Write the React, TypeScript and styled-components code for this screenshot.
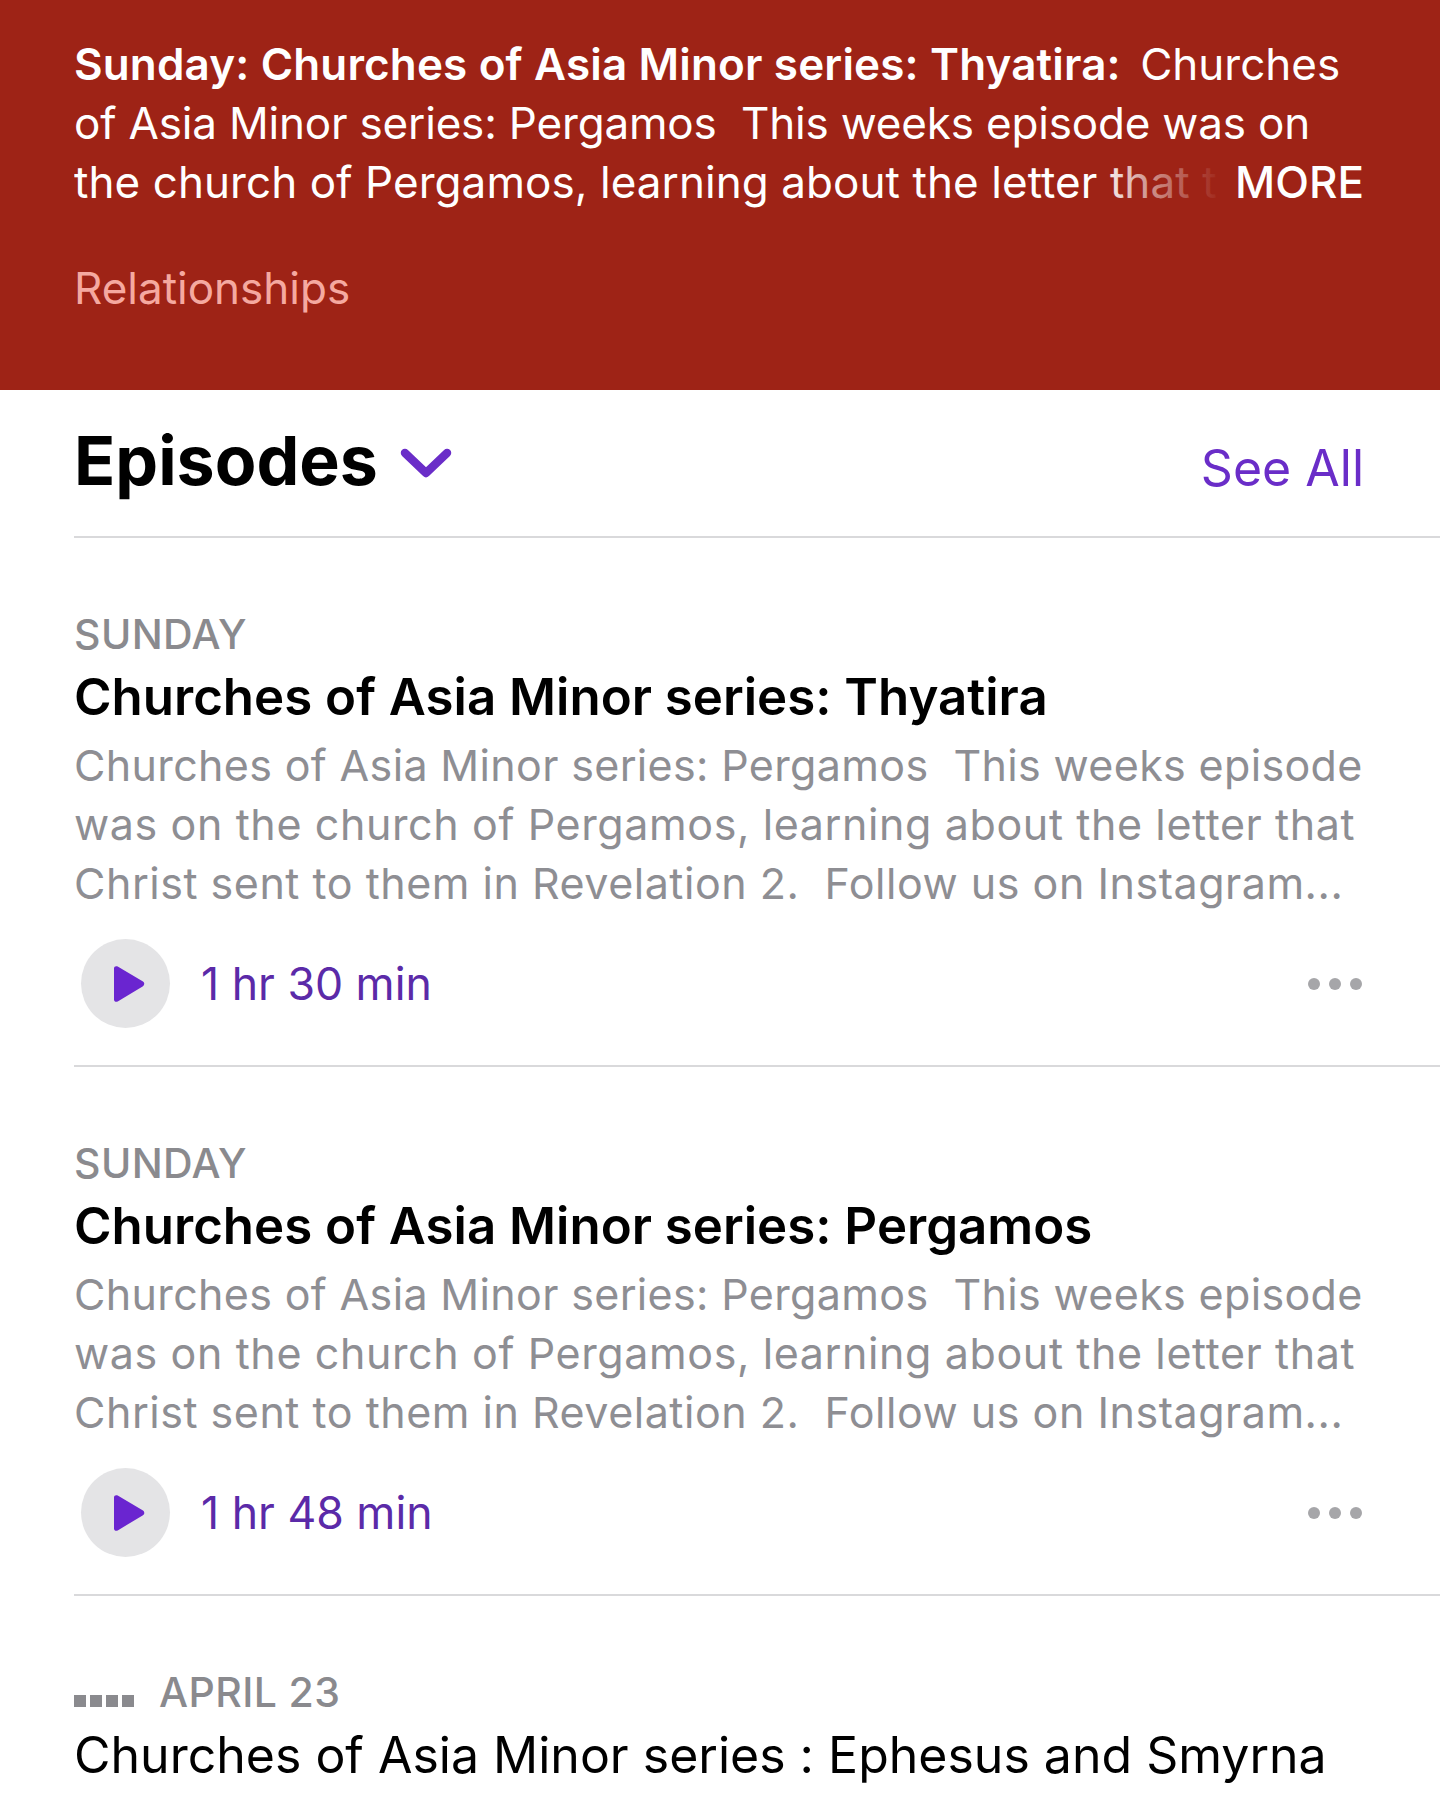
import styled, { createGlobalStyle } from "styled-components";

const GlobalStyle = createGlobalStyle`
    html, body {
        margin: 0;
        padding: 0;
        background: #fff;
        font-family: "Inter", "Liberation Sans", sans-serif;
        font-feature-settings: "calt" 0;
    }
    * { box-sizing: border-box; }
`;

const Page = styled.div`
    width: 1440px;
    height: 1800px;
    overflow: hidden;
    background: #fff;
`;

const Hero = styled.header`
    height: 390px;
    padding: 35px 76px 0 74px;
    background: #9e2316;
    color: #fff;
`;

const Blurb = styled.div`
    position: relative;
    font-size: 44px;
    line-height: 59px;
`;

const BlurbLine = styled.div<{ $tracking?: number }>`
    white-space: nowrap;
    overflow: hidden;
    letter-spacing: ${props => props.$tracking ?? 0}px;
`;

const Strong = styled.b`
    margin-right: 7px;
    font-weight: 600;
    letter-spacing: 0.15px;
`;

const More = styled.span`
    position: absolute;
    right: 0;
    bottom: 0;
    padding-left: 135px;
    font-weight: 500;
    background: linear-gradient(to right, rgba(158, 35, 22, 0), rgba(158, 35, 22, 0.5) 50px, #9e2316 122px);
`;

const Genre = styled.div`
    margin-top: 47px;
    font-size: 44px;
    line-height: 59px;
    color: #f5a9a0;
`;

const SectionHead = styled.div`
    height: 148px;
    margin-left: 74px;
    padding-right: 76px;
    display: flex;
    align-items: center;
    border-bottom: 2px solid #d9d9db;
`;

const SectionTitle = styled.h2`
    margin: 0 22px 6px 0;
    font-size: 68px;
    font-weight: 700;
    color: #000;
`;

const SeeAll = styled.a`
    margin-left: auto;
    padding-top: 10px;
    font-size: 50px;
    color: #6a2dc8;
`;

const Episode = styled.article`
    height: 529px;
    margin-left: 74px;
    padding: 66px 76px 0 0;
    border-bottom: 2px solid #d9d9db;
`;

const DateRow = styled.div`
    display: flex;
    align-items: center;
    gap: 25px;
    height: 60px;
    font-size: 41px;
    font-weight: 500;
    letter-spacing: 0.4px;
    color: #8a8a8e;
`;

const Bars = styled.svg`
    display: block;
    margin-top: 18px;
`;

const EpisodeTitle = styled.h3<{ $played?: boolean }>`
    margin: 0;
    height: 66px;
    line-height: 66px;
    font-size: ${props => (props.$played ? 50 : 51)}px;
    font-weight: ${props => (props.$played ? 400 : 600)};
    color: #000;
    white-space: nowrap;
`;

const Summary = styled.div`
    margin-top: 6px;
    font-size: 43px;
    line-height: 59px;
    color: #8e8e93;
    white-space: nowrap;
`;

const SummaryLine = styled.div<{ $tracking: number }>`
    letter-spacing: ${props => props.$tracking}px;
`;

const Controls = styled.div`
    display: flex;
    align-items: center;
    margin-top: 26px;
    padding-left: 7px;
`;

const PlayButton = styled.button`
    width: 89px;
    height: 89px;
    margin-right: 31px;
    padding: 0 0 0 6px;
    display: flex;
    align-items: center;
    justify-content: center;
    border: 0;
    border-radius: 50%;
    background: #e4e4e6;
`;

const Duration = styled.span`
    font-size: 44.6px;
    color: #5b2aa8;
`;

const Dots = styled.div`
    margin: 0 2px 0 auto;
    display: flex;
    gap: 9px;
`;

const Dot = styled.i`
    width: 12px;
    height: 12px;
    border-radius: 50%;
    background: #a6a6a9;
`;

const episodes = [
    { title: "Churches of Asia Minor series: Thyatira", duration: "1 hr 30 min" },
    { title: "Churches of Asia Minor series: Pergamos", duration: "1 hr 48 min" },
];

function PlayIcon() {
    return (
        <svg width="34" height="38" viewBox="0 0 34 38">
            <path
                d="M2 3.5C2 1.5 4 .6 5.7 1.6L31 16.6c1.7 1 1.7 3.6 0 4.6L5.7 36.4C4 37.4 2 36.5 2 34.5z"
                fill="#6a25d0"
            />
        </svg>
    );
}

function Chevron() {
    return (
        <svg width="52" height="32" viewBox="0 0 52 32">
            <path d="M5 6l21 20L47 6" fill="none" stroke="#6a2dc8" strokeWidth="8.5" strokeLinecap="round" strokeLinejoin="round" />
        </svg>
    );
}

function App() {
    return (
        <Page>
            <GlobalStyle />
            <Hero>
                <Blurb>
                    <BlurbLine><Strong>Sunday: Churches of Asia Minor series: Thyatira:</Strong> Churches</BlurbLine>
                    <BlurbLine $tracking={-0.18}>of Asia Minor series: Pergamos&nbsp; This weeks episode was on</BlurbLine>
                    <BlurbLine $tracking={0.07}>the church of Pergamos, learning about the letter that t</BlurbLine>
                    <More>MORE</More>
                </Blurb>
                <Genre>Relationships</Genre>
            </Hero>
            <SectionHead>
                <SectionTitle>Episodes</SectionTitle>
                <Chevron />
                <SeeAll>See All</SeeAll>
            </SectionHead>
            {episodes.map(ep => (
                <Episode key={ep.title}>
                    <DateRow>SUNDAY</DateRow>
                    <EpisodeTitle>{ep.title}</EpisodeTitle>
                    <Summary>
                        <SummaryLine $tracking={0.35}>Churches of Asia Minor series: Pergamos&nbsp; This weeks episode</SummaryLine>
                        <SummaryLine $tracking={0.61}>was on the church of Pergamos, learning about the letter that</SummaryLine>
                        <SummaryLine $tracking={0.52}>Christ sent to them in Revelation 2.&nbsp; Follow us on Instagram...</SummaryLine>
                    </Summary>
                    <Controls>
                        <PlayButton><PlayIcon /></PlayButton>
                        <Duration>{ep.duration}</Duration>
                        <Dots><Dot /><Dot /><Dot /></Dots>
                    </Controls>
                </Episode>
            ))}
            <Episode>
                <DateRow>
                    <Bars width="60" height="12" viewBox="0 0 60 12" fill="#8a8a8e">
                        <rect x="0" width="12" height="12" />
                        <rect x="16" width="12" height="12" />
                        <rect x="32" width="12" height="12" />
                        <rect x="48" width="12" height="12" />
                    </Bars>
                    APRIL 23
                </DateRow>
                <EpisodeTitle $played>Churches of Asia Minor series : Ephesus and Smyrna</EpisodeTitle>
            </Episode>
        </Page>
    );
}

export default App;
